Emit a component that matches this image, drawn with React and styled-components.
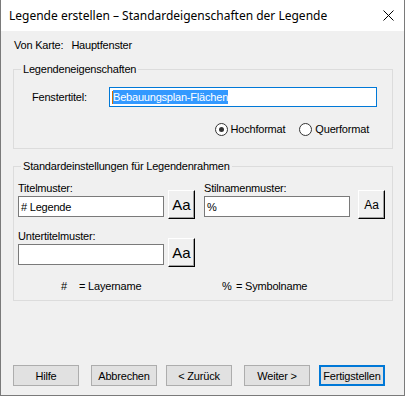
import styled, { createGlobalStyle, css } from 'styled-components'

const GlobalStyle = createGlobalStyle`
body {
  margin: 0;
  font-family: "Liberation Sans", Arial, sans-serif;
  font-size: 11px;
  letter-spacing: -0.2px;
  color: #000;
}
`

const Window = styled.div`
box-sizing: border-box;
width: 405px;
height: 396px;
display: flex;
flex-direction: column;
border: 1px solid #7a7a7a;
border-top: none;
background: #f0f0f0;
`

const TitleBar = styled.div`
height: 31px;
flex: 0 0 31px;
background: #fff;
display: flex;
align-items: center;
justify-content: space-between;
padding: 0 10px 0 8px;
`

const Title = styled.span`
font-family: "Segoe UI", "Noto Sans", "Liberation Sans", sans-serif;
font-size: 12px;
letter-spacing: 0;
color: #000;
`

const Body = styled.div`
flex: 1;
display: flex;
flex-direction: column;
padding: 8px 11px 9px 12px;
`

const SourceRow = styled.div`
display: flex;
gap: 8px;
line-height: 13px;
padding-left: 1px;
`

const GroupBox = styled.fieldset`
margin: 11px 0 0;
padding: 0 0 ${p => p.$bottom}px;
min-width: 0;
border: 1px solid #dcdcdc;
`

const Caption = styled.legend`
margin-left: 7px;
padding: 0 2px;
line-height: 13px;
`

const TitleRow = styled.div`
display: flex;
align-items: center;
margin-top: 11px;
padding-left: 18px;
`

const FieldLabel = styled.span`
width: ${p => p.$width || 'auto'};
line-height: 13px;
`

const TextBox = styled.div`
box-sizing: border-box;
width: ${p => p.$width}px;
height: ${p => p.$height || 21}px;
background: #fff;
border: 1px solid ${p => p.$focused ? '#0078d7' : '#7a7a7a'};
display: flex;
align-items: center;
padding-left: 2px;
white-space: nowrap;
`

const Caret = styled.span`
width: 1px;
height: 13px;
background: #d96a00;
`

const Selection = styled.span`
background: #3399ff;
color: #fff;
line-height: 14px;
`

const RadioRow = styled.div`
display: flex;
justify-content: flex-end;
gap: 14px;
margin-top: 15px;
padding-right: 23px;
`

const RadioOption = styled.label`
display: flex;
align-items: center;
gap: 3px;
line-height: 14px;
`

const RadioCircle = styled.span`
box-sizing: border-box;
width: 13px;
height: 13px;
border-radius: 50%;
border: 1px solid #333;
background: #fff;
display: flex;
align-items: center;
justify-content: center;
&::after {
  content: '';
  width: 5px;
  height: 5px;
  border-radius: 50%;
  background: ${p => p.$checked ? '#333' : 'transparent'};
}
`

const PatternArea = styled.div`
display: flex;
flex-direction: column;
padding-left: 4px;
margin-top: 9px;
`

const PatternRow = styled.div`
display: flex;
margin-top: ${p => p.$top || 0}px;
`

const PatternBlock = styled.div`
display: flex;
align-items: flex-start;
gap: ${p => p.$gap}px;
margin-left: ${p => p.$left || 0}px;
`

const Field = styled.div`
display: flex;
flex-direction: column;
gap: 1px;
`

const FontButton = styled.button`
box-sizing: border-box;
width: 27px;
height: 29px;
margin-top: 8px;
padding: 0;
background: #f0f0f0;
border: 1px solid;
border-color: #fff #000 #000 #fff;
box-shadow: inset -1px -1px 0 #a0a0a0;
font-family: "Liberation Sans", Arial, sans-serif;
font-size: ${p => p.$small ? 12 : 15}px;
letter-spacing: 0;
color: #000;
`

const KeyRow = styled.div`
display: flex;
margin-top: 13px;
padding-left: 43px;
line-height: 13px;
`

const KeyItem = styled.div`
display: flex;
width: ${p => p.$width || 'auto'};
`

const KeySymbol = styled.span`
width: ${p => p.$width}px;
`

const ButtonBar = styled.div`
display: flex;
margin-top: auto;
`

const DialogButton = styled.button`
box-sizing: border-box;
width: 66px;
height: 21px;
margin-left: ${p => p.$left || 0}px;
padding: 0;
background: #e1e1e1;
border: 1px solid #adadad;
font-family: "Liberation Sans", Arial, sans-serif;
font-size: 11px;
letter-spacing: -0.2px;
color: #000;
${p => p.$default && css`
  border: 2px solid #0078d7;
`}
`

function CloseIcon() {
    return (
        <svg width="11" height="11" viewBox="0 0 11 11">
            <path d="M0.5 0.5 L10.5 10.5 M10.5 0.5 L0.5 10.5" stroke="#000" strokeWidth="1" fill="none" />
        </svg>
    )
}

function Radio({ checked, children }) {
    return (
        <RadioOption>
            <RadioCircle $checked={checked} />
            {children}
        </RadioOption>
    )
}

function Pattern({ label, value, gap, left, small }) {
    return (
        <PatternBlock $gap={gap} $left={left}>
            <Field>
                <FieldLabel>{label}</FieldLabel>
                <TextBox $width={146}>{value}</TextBox>
            </Field>
            <FontButton $small={small}>Aa</FontButton>
        </PatternBlock>
    )
}

export default function App() {
    return (
        <>
            <GlobalStyle />
            <Window>
                <TitleBar>
                    <Title>Legende erstellen – Standardeigenschaften der Legende</Title>
                    <CloseIcon />
                </TitleBar>
                <Body>
                    <SourceRow>
                        <span>Von Karte:</span>
                        <span>Hauptfenster</span>
                    </SourceRow>

                    <GroupBox $bottom={12}>
                        <Caption>Legendeneigenschaften</Caption>
                        <TitleRow>
                            <FieldLabel $width="77px">Fenstertitel:</FieldLabel>
                            <TextBox $width={268} $height={20} $focused>
                                <Caret />
                                <Selection>Bebauungsplan-Flächen</Selection>
                            </TextBox>
                        </TitleRow>
                        <RadioRow>
                            <Radio checked>Hochformat</Radio>
                            <Radio>Querformat</Radio>
                        </RadioRow>
                    </GroupBox>

                    <GroupBox $bottom={7}>
                        <Caption>Standardeinstellungen für Legendenrahmen</Caption>
                        <PatternArea>
                            <PatternRow>
                                <Pattern label="Titelmuster:" value="# Legende" gap={4} />
                                <Pattern label="Stilnamenmuster:" value="%" gap={8} left={9} small />
                            </PatternRow>
                            <PatternRow $top={11}>
                                <Pattern label="Untertitelmuster:" value="" gap={4} />
                            </PatternRow>
                            <KeyRow>
                                <KeyItem $width="161px">
                                    <KeySymbol $width={18}>#</KeySymbol>
                                    <span>= Layername</span>
                                </KeyItem>
                                <KeyItem>
                                    <KeySymbol $width={14}>%</KeySymbol>
                                    <span>= Symbolname</span>
                                </KeyItem>
                            </KeyRow>
                        </PatternArea>
                    </GroupBox>

                    <ButtonBar>
                        <DialogButton>Hilfe</DialogButton>
                        <DialogButton $left={12}>Abbrechen</DialogButton>
                        <DialogButton $left={9}>&lt; Zurück</DialogButton>
                        <DialogButton $left={12}>Weiter &gt;</DialogButton>
                        <DialogButton $left={9} $default>Fertigstellen</DialogButton>
                    </ButtonBar>
                </Body>
            </Window>
        </>
    )
}
